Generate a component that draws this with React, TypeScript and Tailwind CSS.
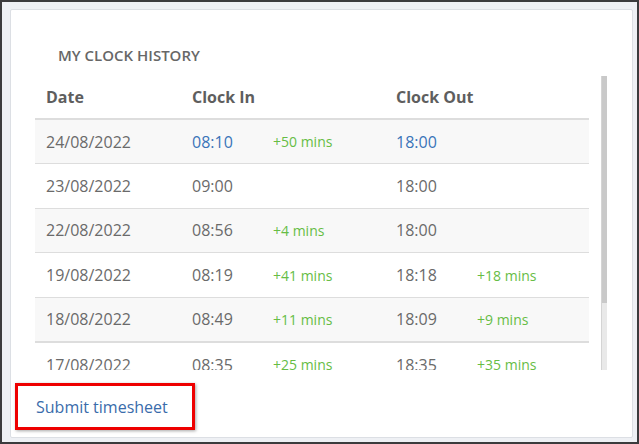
const rows = [
  { date: '24/08/2022', inT: '08:10', inD: '+50 mins', outT: '18:00', outD: '', today: true },
  { date: '23/08/2022', inT: '09:00', inD: '', outT: '18:00', outD: '' },
  { date: '22/08/2022', inT: '08:56', inD: '+4 mins', outT: '18:00', outD: '' },
  { date: '19/08/2022', inT: '08:19', inD: '+41 mins', outT: '18:18', outD: '+18 mins' },
  { date: '18/08/2022', inT: '08:49', inD: '+11 mins', outT: '18:09', outD: '+9 mins' },
  { date: '17/08/2022', inT: '08:35', inD: '+25 mins', outT: '18:35', outD: '+35 mins' },
  { date: '16/08/2022', inT: '08:58', inD: '+2 mins', outT: '18:00', outD: '' },
];

export default function App() {
  return (
    <div
      className="w-[639px] h-[444px] border-2 border-[#3b3b3d] bg-[#eef0f4] pl-[8px] pt-[7px] pr-[4px] pb-[4px]"
      style={{ fontFamily: '"Open Sans", "Noto Sans", sans-serif' }}
    >
      <div className="h-full bg-white border border-[#dcdfe4] rounded-[2px] overflow-hidden">
        {/* Title */}
        <h2 className="mt-[35px] pl-[47px] text-[15px] leading-[20px] font-semibold text-[#676767]">
          MY CLOCK HISTORY
        </h2>

        {/* Scrollable table area */}
        <div className="mt-[11px] ml-[24px] flex h-[294px]">
          <div className="w-[554px] overflow-hidden">
            <table className="w-[554px] border-collapse table-fixed">
              <colgroup>
                <col className="w-[146px]" />
                <col className="w-[81px]" />
                <col className="w-[123px]" />
                <col className="w-[81px]" />
                <col className="w-[123px]" />
              </colgroup>
              <thead>
                <tr className="h-[43px] border-b-2 border-[#dddddd] text-left text-[16px] font-bold text-[#5e5e5e]">
                  <th className="pl-[11px] font-bold">Date</th>
                  <th className="pl-[11px] font-bold" colSpan={2}>Clock In</th>
                  <th className="pl-[11px] font-bold" colSpan={2}>Clock Out</th>
                </tr>
              </thead>
              <tbody>
                {rows.map((r, i) => (
                  <tr
                    key={r.date}
                    className={`h-[44.6px] border-b border-[#dddddd] text-[16px] text-[#6a6a6a] ${i % 2 === 0 ? 'bg-[#f8f8f8]' : 'bg-white'} ${i === 4 ? 'border-b-2' : ''}`}
                  >
                    <td className="pl-[11px]">{r.date}</td>
                    <td className={`pl-[11px] ${r.today ? 'text-[#3a74b8]' : ''}`}>{r.inT}</td>
                    <td className="pl-[11px] text-[14px] text-[#66bd45]">{r.inD}</td>
                    <td className={`pl-[11px] ${r.today ? 'text-[#3a74b8]' : ''}`}>{r.outT}</td>
                    <td className="pl-[11px] text-[14px] text-[#66bd45]">{r.outD}</td>
                  </tr>
                ))}
              </tbody>
            </table>
          </div>
          {/* Scrollbar */}
          <div className="ml-[12px] w-[6px] h-full flex flex-col bg-[#e9e9e9] border-l border-[#d4d4d4]">
            <div className="h-[227px] bg-[#c9c9c9]" />
          </div>
        </div>

        {/* Submit link */}
        <div className="mt-[13px] ml-[4px] w-[180px] h-[47px] border-[3px] border-[#ee0000] shadow-[1px_1px_3px_rgba(0,0,0,0.35)] flex items-center pl-[18px]">
          <a href="#" className="text-[16px] text-[#3a6cab]">
            Submit timesheet
          </a>
        </div>
      </div>
    </div>
  );
}
